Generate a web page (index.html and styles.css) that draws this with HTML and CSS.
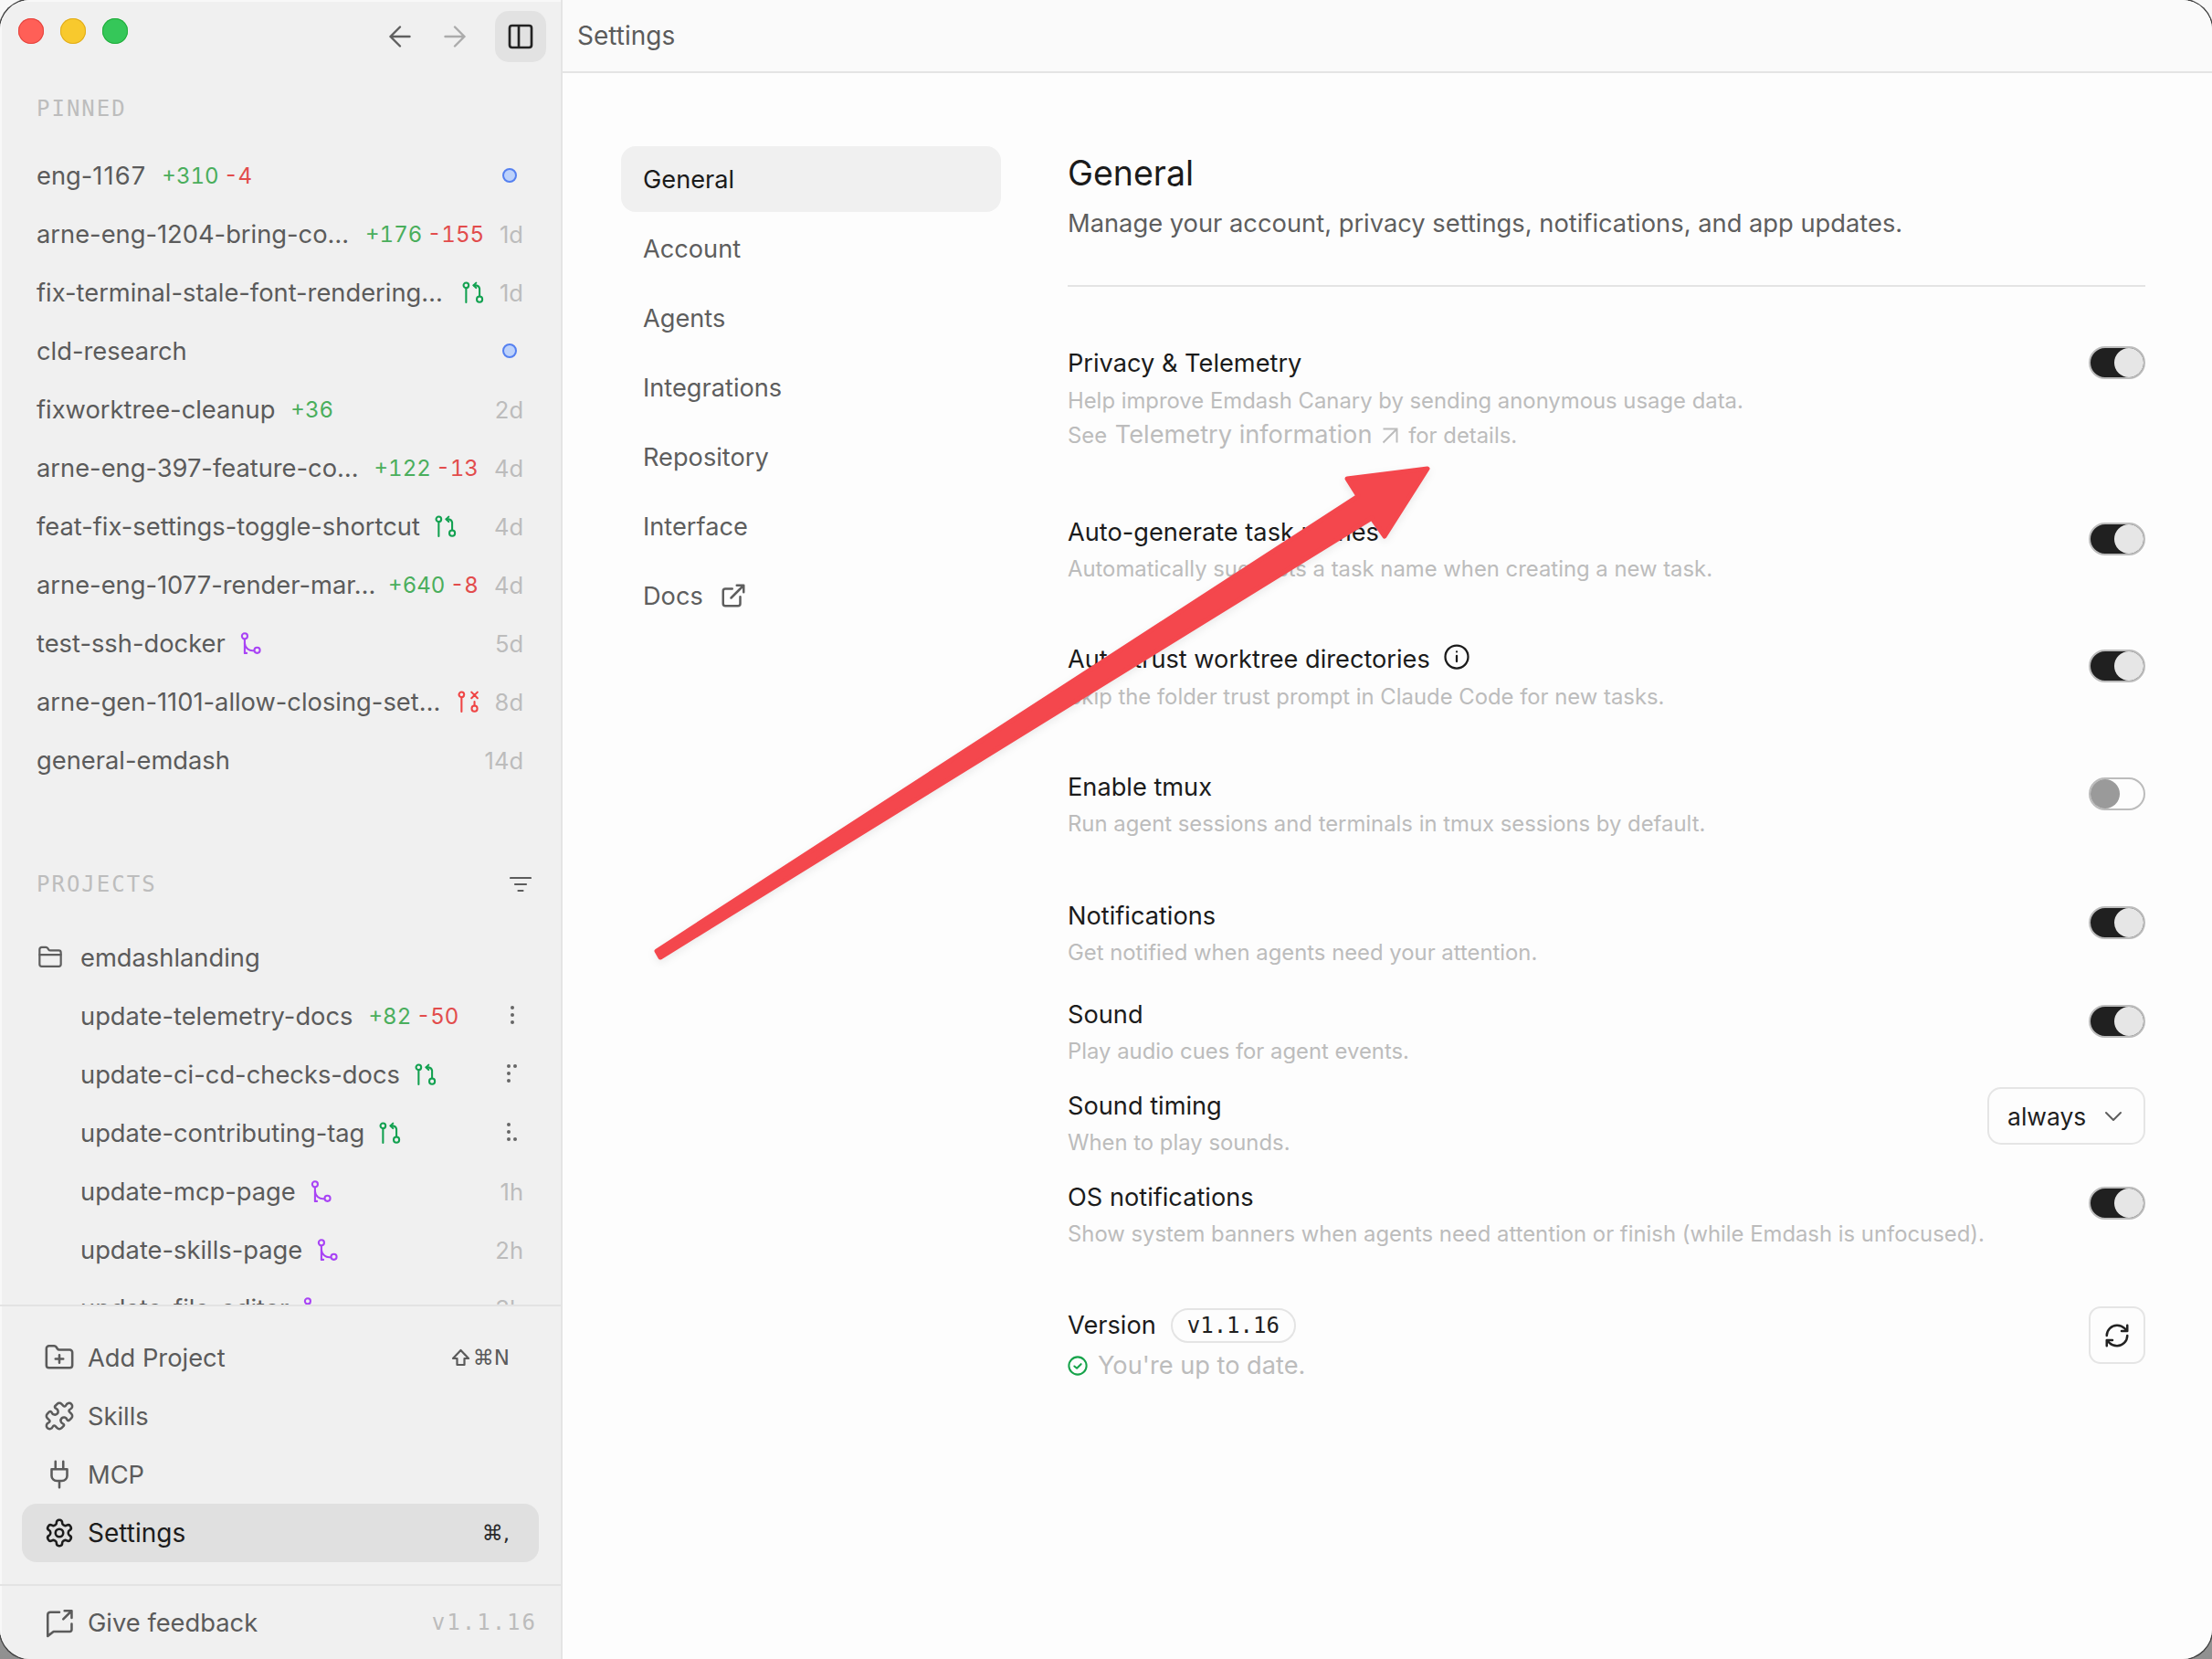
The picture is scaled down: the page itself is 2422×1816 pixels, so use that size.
FILE: index.html
```html
<!DOCTYPE html>
<html lang="en">
<head>
<meta charset="utf-8">
<title>Settings</title>
<link rel="stylesheet" href="styles.css">
</head>
<body>
<svg class="defs" width="0" height="0">
  <symbol id="pr" viewBox="0 0 22 22"><circle cx="4" cy="4" r="2.6"/><path d="M4 6.6V21"/><path d="M14 1.5 11.5 4l2.5 2.5"/><path d="M11.500 4H14a4 4 0 0 1 3.500 3v8"/><circle cx="17.5" cy="18" r="2.8"/></symbol>
  <symbol id="merged" viewBox="0 0 22 22"><circle cx="4.5" cy="4" r="2.8"/><path d="M4.500 6.800V21"/><path d="M4.500 11a8 8 0 0 0 9 7.500"/><circle cx="17" cy="18.2" r="2.8"/><path d="M4.500 21h2"/></symbol>
  <symbol id="closed" viewBox="0 0 22 22"><circle cx="4" cy="4" r="2.6"/><path d="M4 6.600V21"/><path d="m14 1.500 6 6M20 1.500l-6 6"/><path d="M17 11v4"/><circle cx="17" cy="18" r="2.8"/></symbol>
</svg>
<div class="window">
  <aside class="sidebar">
    <div class="topbar">
      <div class="lights"><span class="light red"></span><span class="light yellow"></span><span class="light green"></span></div>
      <svg class="nav-arrow" viewBox="0 0 24 24"><path d="M19 12H5M12 19l-7-7 7-7"/></svg>
      <svg class="nav-arrow off" viewBox="0 0 24 24"><path d="M5 12h14M12 5l7 7-7 7"/></svg>
      <div class="toggle-side"><svg viewBox="0 0 24 24"><rect x="3" y="3" width="18" height="18" rx="2"/><path d="M10.500 3v18"/></svg></div>
    </div>
    <div class="scroll">
      <div class="section-label pinned-label">PINNED</div>
      <div class="row"><span class="name">eng-<span class="tnum">1167</span></span><span class="stats"><i class="add">+310</i> <i class="del">-4</i></span><span class="dot"></span></div>
      <div class="row"><span class="name">arne-eng-1204-bring-co…</span><span class="stats push"><i class="add">+176</i> <i class="del">-155</i></span><span class="time">1d</span></div>
      <div class="row"><span class="name">fix-terminal-stale-font-rendering…</span><svg class="git open push"><use href="#pr"/></svg><span class="time">1d</span></div>
      <div class="row"><span class="name">cld-research</span><span class="dot"></span></div>
      <div class="row"><span class="name">fixworktree-cleanup</span><span class="stats"><i class="add">+36</i></span><span class="time">2d</span></div>
      <div class="row"><span class="name">arne-eng-397-feature-co…</span><span class="stats push"><i class="add">+122</i> <i class="del">-13</i></span><span class="time">4d</span></div>
      <div class="row"><span class="name">feat-fix-settings-toggle-shortcut</span><svg class="git open"><use href="#pr"/></svg><span class="time">4d</span></div>
      <div class="row"><span class="name">arne-eng-1077-render-mar…</span><span class="stats push"><i class="add">+640</i> <i class="del">-8</i></span><span class="time">4d</span></div>
      <div class="row"><span class="name">test-ssh-docker</span><svg class="git merged"><use href="#merged"/></svg><span class="time">5d</span></div>
      <div class="row"><span class="name">arne-gen-1101-allow-closing-set…</span><svg class="git shut push"><use href="#closed"/></svg><span class="time">8d</span></div>
      <div class="row"><span class="name">general-emdash</span><span class="time">14d</span></div>

      <div class="section-label projects-label">PROJECTS
        <svg class="filter" viewBox="0 0 24 18"><path d="M1 2h22M6 9h12M9.500 16h5"/></svg>
      </div>
      <div class="row project"><svg class="folder" viewBox="0 0 24 24"><path d="M20 20.500a2 2 0 0 0 2-2V7.500a2 2 0 0 0-2-2h-7.900a2 2 0 0 1-1.690-.9L9.600 3.400A2 2 0 0 0 7.930 2.500H4a2 2 0 0 0-2 2v14a2 2 0 0 0 2 2Z"/><path d="M2 9.500h20"/></svg><span class="name">emdashlanding</span></div>
      <div class="row task"><span class="name">update-telemetry-docs</span><span class="stats"><i class="add">+82</i> <i class="del">-50</i></span>
        <svg class="spin" viewBox="0 0 12 26"><circle cx="6" cy="4" r="2"/><circle cx="6" cy="12" r="2"/><circle cx="6" cy="20" r="2"/></svg></div>
      <div class="row task"><span class="name">update-ci-cd-checks-docs</span><svg class="git open"><use href="#pr"/></svg>
        <svg class="spin" viewBox="0 0 12 26"><circle cx="2" cy="4" r="2"/><circle cx="9" cy="4" r="2"/><circle cx="2" cy="12" r="2"/><circle cx="2" cy="20" r="2"/></svg></div>
      <div class="row task"><span class="name">update-contributing-tag</span><svg class="git open"><use href="#pr"/></svg>
        <svg class="spin" viewBox="0 0 12 26"><circle cx="2" cy="4" r="2"/><circle cx="2" cy="12" r="2"/><circle cx="2" cy="20" r="2"/><circle cx="9" cy="20" r="2"/></svg></div>
      <div class="row task"><span class="name">update-mcp-page</span><svg class="git merged"><use href="#merged"/></svg><span class="time">1h</span></div>
      <div class="row task"><span class="name">update-skills-page</span><svg class="git merged"><use href="#merged"/></svg><span class="time">2h</span></div>
      <div class="row task"><span class="name">update-file-editor</span><svg class="git merged"><use href="#merged"/></svg><span class="time">3h</span></div>
    </div>
    <div class="foot">
      <div class="foot-item"><svg class="foot-icon" viewBox="0 0 24 24"><path d="M12 10v6M9 13h6"/><path d="M20 20a2 2 0 0 0 2-2V8a2 2 0 0 0-2-2h-7.900a2 2 0 0 1-1.690-.9L9.600 3.900A2 2 0 0 0 7.930 3H4a2 2 0 0 0-2 2v13a2 2 0 0 0 2 2Z"/></svg><span>Add Project</span><kbd class="keys"><svg class="shift" viewBox="0 0 21 20"><path d="M10.500 2 19 11h-4.500v7h-8v-7H2Z"/></svg>⌘N</kbd></div>
      <div class="foot-item"><svg class="foot-icon" viewBox="0 0 24 24"><path d="M19.439 7.850c-.049.322.059.648.289.878l1.568 1.568c.47.47.706 1.087.706 1.704s-.235 1.233-.706 1.704l-1.611 1.611a.98.98 0 0 1-.837.276c-.47-.07-.802-.48-.968-.925a2.501 2.501 0 1 0-3.214 3.214c.446.166.855.497.925.968a.979.979 0 0 1-.276.837l-1.610 1.610a2.404 2.404 0 0 1-1.705.707 2.402 2.402 0 0 1-1.704-.706l-1.568-1.568a1.026 1.026 0 0 0-.877-.29c-.493.074-.84.504-1.020.968a2.500 2.500 0 1 1-3.237-3.237c.464-.18.894-.527.967-1.020a1.026 1.026 0 0 0-.289-.877l-1.568-1.568A2.402 2.402 0 0 1 1.998 12c0-.617.236-1.234.706-1.704L4.230 8.770c.24-.24.581-.353.917-.303.515.077.877.528 1.073 1.010a2.500 2.500 0 1 0 3.259-3.259c-.482-.196-.933-.558-1.010-1.073-.05-.336.062-.676.303-.917l1.525-1.525A2.402 2.402 0 0 1 12 1.998c.617 0 1.234.236 1.704.706l1.568 1.568c.23.23.556.338.877.29.493-.074.84-.504 1.020-.968a2.500 2.500 0 1 1 3.237 3.237c-.464.18-.894.527-.967 1.020Z"/></svg><span>Skills</span></div>
      <div class="foot-item"><svg class="foot-icon" viewBox="0 0 24 24"><path d="M12 22v-5M9 8V2M15 8V2M18 8v5a4 4 0 0 1-4 4h-4a4 4 0 0 1-4-4V8Z"/></svg><span>MCP</span></div>
      <div class="foot-item active"><svg class="foot-icon" viewBox="0 0 24 24"><path d="M12.220 2h-.44a2 2 0 0 0-2 2v.18a2 2 0 0 1-1 1.730l-.43.25a2 2 0 0 1-2 0l-.15-.08a2 2 0 0 0-2.730.73l-.22.38a2 2 0 0 0 .73 2.730l.15.1a2 2 0 0 1 1 1.720v.51a2 2 0 0 1-1 1.740l-.15.09a2 2 0 0 0-.73 2.730l.22.38a2 2 0 0 0 2.730.73l.15-.08a2 2 0 0 1 2 0l.43.25a2 2 0 0 1 1 1.730V20a2 2 0 0 0 2 2h.44a2 2 0 0 0 2-2v-.18a2 2 0 0 1 1-1.730l.43-.25a2 2 0 0 1 2 0l.15.08a2 2 0 0 0 2.730-.73l.22-.39a2 2 0 0 0-.73-2.730l-.15-.08a2 2 0 0 1-1-1.740v-.5a2 2 0 0 1 1-1.740l.15-.09a2 2 0 0 0 .73-2.730l-.22-.38a2 2 0 0 0-2.730-.73l-.15.08a2 2 0 0 1-2 0l-.43-.25a2 2 0 0 1-1-1.730V4a2 2 0 0 0-2-2z"/><circle cx="12" cy="12" r="3"/></svg><span>Settings</span><kbd class="keys">⌘,</kbd></div>
      <div class="feedback"><svg class="foot-icon" viewBox="0 0 24 24"><path d="M12 4H5a2 2 0 0 0-2 2v16.500L7.500 19H20a1.500 1.500 0 0 0 1.500-1.500V13"/><path d="M16 3h5.500v5.500M21.500 3 15 9.500"/></svg><span>Give feedback</span><span class="foot-version">v1.1.16</span></div>
    </div>
  </aside>
  <main class="main">
    <header class="main-head">Settings</header>
    <div class="main-body">
      <nav class="settings-nav">
        <a class="nav-item current">General</a>
        <a class="nav-item">Account</a>
        <a class="nav-item">Agents</a>
        <a class="nav-item">Integrations</a>
        <a class="nav-item">Repository</a>
        <a class="nav-item">Interface</a>
        <a class="nav-item">Docs <svg class="ext" viewBox="0 0 24 24"><path d="M15 3h6v6M10 14 21 3M18 13v6a2 2 0 0 1-2 2H5a2 2 0 0 1-2-2V8a2 2 0 0 1 2-2h6"/></svg></a>
      </nav>
      <section class="panel">
        <h1 class="title">General</h1>
        <p class="subtitle">Manage your account, privacy settings, notifications, and app updates.</p>
        <div class="rule"></div>

        <div class="setting s-privacy">
          <div class="text"><div class="label">Privacy &amp; Telemetry</div>
            <div class="desc">Help improve Emdash Canary by sending anonymous usage data.</div>
            <div class="desc see">See <span class="link">Telemetry information</span><svg class="out" viewBox="6 6 12 12"><path d="M7 17 17 7M7 7h10v10"/></svg> for details.</div></div>
          <span class="switch on"></span>
        </div>
        <div class="setting s-auto">
          <div class="text"><div class="label">Auto-generate task names</div><div class="desc">Automatically suggests a task name when creating a new task.</div></div>
          <span class="switch on"></span>
        </div>
        <div class="setting s-trust">
          <div class="text"><div class="label">Auto-trust worktree directories <svg class="info" viewBox="0 0 24 24"><circle cx="12" cy="12" r="10"/><path d="M12 16v-5M12 7.500h.01"/></svg></div><div class="desc">Skip the folder trust prompt in Claude Code for new tasks.</div></div>
          <span class="switch on"></span>
        </div>
        <div class="setting s-tmux">
          <div class="text"><div class="label">Enable tmux</div><div class="desc">Run agent sessions and terminals in tmux sessions by default.</div></div>
          <span class="switch off"></span>
        </div>
        <div class="setting s-notif">
          <div class="text"><div class="label">Notifications</div><div class="desc">Get notified when agents need your attention.</div></div>
          <span class="switch on"></span>
        </div>
        <div class="setting s-sound">
          <div class="text"><div class="label">Sound</div><div class="desc">Play audio cues for agent events.</div></div>
          <span class="switch on"></span>
        </div>
        <div class="setting s-timing">
          <div class="text"><div class="label">Sound timing</div><div class="desc">When to play sounds.</div></div>
          <div class="select">always<svg viewBox="0 0 24 24"><path d="m4 8 8 8 8-8"/></svg></div>
        </div>
        <div class="setting s-os">
          <div class="text"><div class="label">OS notifications</div><div class="desc">Show system banners when agents need attention or finish (while Emdash is unfocused).</div></div>
          <span class="switch on"></span>
        </div>
        <div class="setting s-version">
          <div class="text"><div class="label version-line">Version <span class="badge">v1.1.16</span></div>
            <div class="uptodate"><svg viewBox="0 0 24 24"><circle cx="12" cy="12" r="10.500"/><path d="m8 12.500 3 2.500 5-5"/></svg>You're up to date.</div></div>
          <button class="refresh"><svg viewBox="0 0 24 24"><path d="M3 12a9 9 0 0 1 9-9 9.750 9.750 0 0 1 6.740 2.740L21 8M21 3v5h-5M21 12a9 9 0 0 1-9 9 9.750 9.750 0 0 1-6.740-2.740L3 16M8 16H3v5"/></svg></button>
        </div>
      </section>
    </div>
  </main>
  <svg class="annotation" viewBox="0 0 2422 1816">
    <polygon class="arrow" points="1563,513 1475,524 1487,543 719,1041 723,1048 1502,567 1516,587"/>
  </svg>
</div>
</body>
</html>
```
FILE: styles.css
```css
* { box-sizing: border-box; }
html, body { margin: 0; padding: 0; }
body { width: 2422px; height: 1816px; overflow: hidden; font-family: Inter, "Noto Sans", sans-serif; background: linear-gradient(#f8f8f8, #eeeeee 50%, #909090); }
.defs { position: absolute; }
.window { position: relative; display: flex; width: 2422px; height: 1816px; border-radius: 33px; overflow: hidden; background: #fdfdfd; box-shadow: 0 0 0 1.5px #444; }

.sidebar { width: 616px; flex: none; display: flex; flex-direction: column; background: #f0f0f0; border-right: 2px solid #e4e4e4; box-shadow: inset 2px 2px 0 #f8f8f8; }
.topbar { height: 80px; flex: none; display: flex; align-items: flex-start; }
.lights { display: flex; gap: 18px; margin: 20px 0 0 20px; }
.light { width: 28px; height: 28px; border-radius: 50%; }
.red { background: #ff5f57; box-shadow: inset 0 0 0 1px #e4453f; }
.yellow { background: #f8c92d; box-shadow: inset 0 0 0 1px #e0ac1c; }
.green { background: #35c759; box-shadow: inset 0 0 0 1px #22ad3c; }
.nav-arrow { width: 36px; height: 36px; margin: 22px 0 0 24px; fill: none; stroke: #5f5f5f; stroke-width: 1.600; stroke-linecap: round; stroke-linejoin: round; }
.nav-arrow:first-of-type { margin-left: 280px; }
.nav-arrow.off { stroke: #ababab; }
.toggle-side { width: 56px; height: 56px; margin: 12px 0 0 26px; border-radius: 15px; background: #e2e2e2; display: flex; align-items: center; justify-content: center; }
.toggle-side svg { width: 32px; height: 32px; fill: none; stroke: #222; stroke-width: 2; }

.scroll { flex: 1; min-height: 0; overflow: hidden; padding: 0 0 0 40px; }
.section-label { font-family: "DejaVu Sans Mono", monospace; font-size: 24px; letter-spacing: 2px; color: #bdbdbd; line-height: 30px; display: flex; align-items: center; justify-content: space-between; }
.pinned-label { margin-top: 24px; margin-bottom: 26px; }
.projects-label { margin-top: 89px; margin-bottom: 33px; padding-right: 32px; }
.filter { width: 24px; height: 18px; fill: none; stroke: #5c5c5c; stroke-width: 2.200; stroke-linecap: round; }

.row { height: 64px; display: flex; align-items: center; padding-right: 41px; font-size: 27.3px; color: #5b5b5b; white-space: nowrap; }
.name { flex: none; }
.tnum { letter-spacing: 1.100px; }
.stats { margin-left: 17px; font-size: 24px; word-spacing: -1px; font-variant-numeric: tabular-nums; flex: none; }
.stats i { font-style: normal; }
.add { color: #4aae5c; }
.del { color: #e24c4c; }
.push { margin-left: auto !important; margin-right: 17px; }
.time { margin-left: auto; color: #bcbcbc; font-size: 25.500px; }
.push + .time { margin-left: 0; }
.dot { margin-left: auto; margin-right: 7px; width: 16px; height: 16px; border-radius: 50%; background: #bdd2fb; border: 2px solid #5580f0; }
.git { width: 24px; height: 24px; margin-left: 16px; fill: none; stroke-width: 1.900; stroke-linecap: round; stroke-linejoin: round; flex: none; }
.open { stroke: #12a150; }
.merged { stroke: #a843f5; }
.shut { stroke: #ef4444; }
.folder { width: 30px; height: 28px; margin-right: 18px; fill: none; stroke: #5f5f5f; stroke-width: 1.900; stroke-linecap: round; stroke-linejoin: round; }
.task { padding-left: 48px; }
.spin { margin-left: auto; margin-right: 6px; width: 12px; height: 26px; fill: #666; }

.foot { flex: none; border-top: 2px solid #e3e3e3; padding-top: 24px; display: flex; flex-direction: column; }
.foot-item { height: 64px; margin: 0 24px 0 24px; padding: 0 32px 0 24px; display: flex; align-items: center; font-size: 27.3px; color: #5b5b5b; border-radius: 16px; }
.foot-item.active { background: #e0e0e0; color: #1c1c1c; font-size: 28px; }
.foot-icon { width: 34px; height: 34px; margin-right: 14px; flex: none; fill: none; stroke: currentColor; stroke-width: 1.800; stroke-linecap: round; stroke-linejoin: round; }
.foot-item > span { flex: 1; }
.keys { display: flex; align-items: center; gap: 3px; font-family: "DejaVu Sans", sans-serif; font-size: 23px; color: #5b5b5b; }
.shift { width: 21px; height: 20px; fill: none; stroke: #5b5b5b; stroke-width: 2.200; stroke-linejoin: round; }
.active .keys { color: #2a2a2a; }
.feedback { height: 82px; margin-top: 24px; border-top: 2px solid #e3e3e3; padding: 0 26px 0 48px; display: flex; align-items: center; font-size: 27.3px; color: #5b5b5b; }
.feedback > span:first-of-type { flex: 1; }
.foot-version { font-family: "DejaVu Sans Mono", monospace; font-size: 24px; letter-spacing: 2px; color: #bcbcbc; }

.main { flex: 1; min-width: 0; display: flex; flex-direction: column; background: #fdfdfd; }
.main-head { height: 80px; flex: none; padding: 0 0 0 16px; display: flex; align-items: center; font-size: 28px; color: #5b5b5b; border-bottom: 2px solid #e4e4e4; background: #fafafa; }
.main-body { flex: 1; display: flex; min-height: 0; }
.settings-nav { width: 416px; margin: 80px 0 0 64px; flex: none; display: flex; flex-direction: column; gap: 4px; }
.nav-item { height: 72px; display: flex; align-items: center; padding-left: 24px; font-size: 27.2px; color: #5e5e5e; border-radius: 16px; }
.nav-item.current { background: #f0f0f0; color: #1b1b1b; }
.ext { width: 30px; height: 30px; margin-left: 18px; fill: none; stroke: #5e5e5e; stroke-width: 2; stroke-linecap: round; stroke-linejoin: round; }

.panel { width: 1180px; margin: 0 0 0 73px; padding-top: 86px; }
.title { margin: 0; font-size: 37.500px; font-weight: 400; line-height: 48px; color: #1b1b1b; }
.subtitle { margin: 13px 0 0; font-size: 27.3px; line-height: 36px; color: #5e5e5e; }
.rule { height: 2px; background: #e4e4e4; margin-top: 49px; }
.setting { display: flex; justify-content: space-between; align-items: flex-start; }
.label { font-size: 27.2px; line-height: 36px; color: #1b1b1b; display: flex; align-items: center; }
.desc { font-size: 23.850px; line-height: 32px; color: #bcbcbc; margin-top: 7px; white-space: nowrap; }
.see { display: flex; align-items: baseline; white-space: pre; margin-top: 5px; }
.link { font-size: 27.2px; margin: 0 11px 0 2px; }
.out { width: 18px; height: 18px; align-self: center; margin-right: 4px; fill: none; stroke: #bcbcbc; stroke-width: 1.300; }
.switch { position: relative; display: block; width: 62px; height: 36px; border-radius: 18px; border: 2px solid #bcbcbc; }
.switch::after { content: ""; position: absolute; top: 0; width: 32px; height: 32px; border-radius: 50%; }
.switch.on { background: #202020; }
.switch.on::after { right: 0; background: #e6e6e6; }
.switch.off { background: #fdfdfd; }
.switch.off::after { left: 0; background: #9a9a9a; }
.info { width: 30px; height: 30px; margin-left: 14px; margin-top: -6px; fill: none; stroke: #1b1b1b; stroke-width: 1.800; stroke-linecap: round; }

.s-privacy { margin-top: 66px; }
.s-privacy .switch { margin-top: -1px; }
.s-auto { margin-top: 72px; }
.s-auto .switch { margin-top: 7px; }
.s-auto .desc { margin-top: 6px; }
.s-trust { margin-top: 65px; }
.s-trust .switch { margin-top: 7px; }
.s-tmux { margin-top: 65px; }
.s-tmux .switch { margin-top: 7px; }
.s-tmux .desc, .s-notif .desc, .s-sound .desc, .s-timing .desc, .s-os .desc { margin-top: 6px; }
.s-notif { margin-top: 67px; }
.s-notif .switch { margin-top: 7px; }
.s-sound { margin-top: 34px; }
.s-sound .switch { margin-top: 7px; }
.s-timing { margin-top: 26px; }
.select { width: 173px; height: 63px; margin-top: -3px; border: 2px solid #e5e5e5; border-radius: 15px; padding: 0 0 0 20px; display: flex; align-items: center; font-size: 26.500px; color: #1f1f1f; }
.select svg { width: 24px; height: 24px; margin-left: 18px; fill: none; stroke: #5e5e5e; stroke-width: 2; stroke-linecap: round; stroke-linejoin: round; }
.s-os { margin-top: 26px; }
.s-os .switch { margin-top: 6px; }
.s-version { margin-top: 65px; }
.version-line { gap: 16px; }
.badge { font-family: "DejaVu Sans Mono", monospace; font-size: 24px; line-height: 34px; padding: 0 16px; border: 2px solid #e4e4e4; border-radius: 19px; color: #1f1f1f; }
.uptodate { display: flex; align-items: center; gap: 11px; margin-top: 7px; font-size: 27.2px; line-height: 36px; color: #bcbcbc; }
.uptodate svg { width: 22px; height: 22px; fill: none; stroke: #16a34a; stroke-width: 2.200; stroke-linecap: round; stroke-linejoin: round; }
.refresh { width: 62px; height: 63px; padding: 0; margin-top: -2px; background: #fdfdfd; border: 2px solid #e5e5e5; border-radius: 13px; display: flex; align-items: center; justify-content: center; }
.refresh svg { width: 30px; height: 30px; fill: none; stroke: #222; stroke-width: 2; stroke-linecap: round; stroke-linejoin: round; }

.annotation { position: absolute; left: 0; top: 0; width: 2422px; height: 1816px; pointer-events: none; filter: drop-shadow(0 3px 4px rgba(0,0,0,.08)); }
.arrow { fill: #f4474d; stroke: #f4474d; stroke-width: 5; stroke-linejoin: round; }
```
